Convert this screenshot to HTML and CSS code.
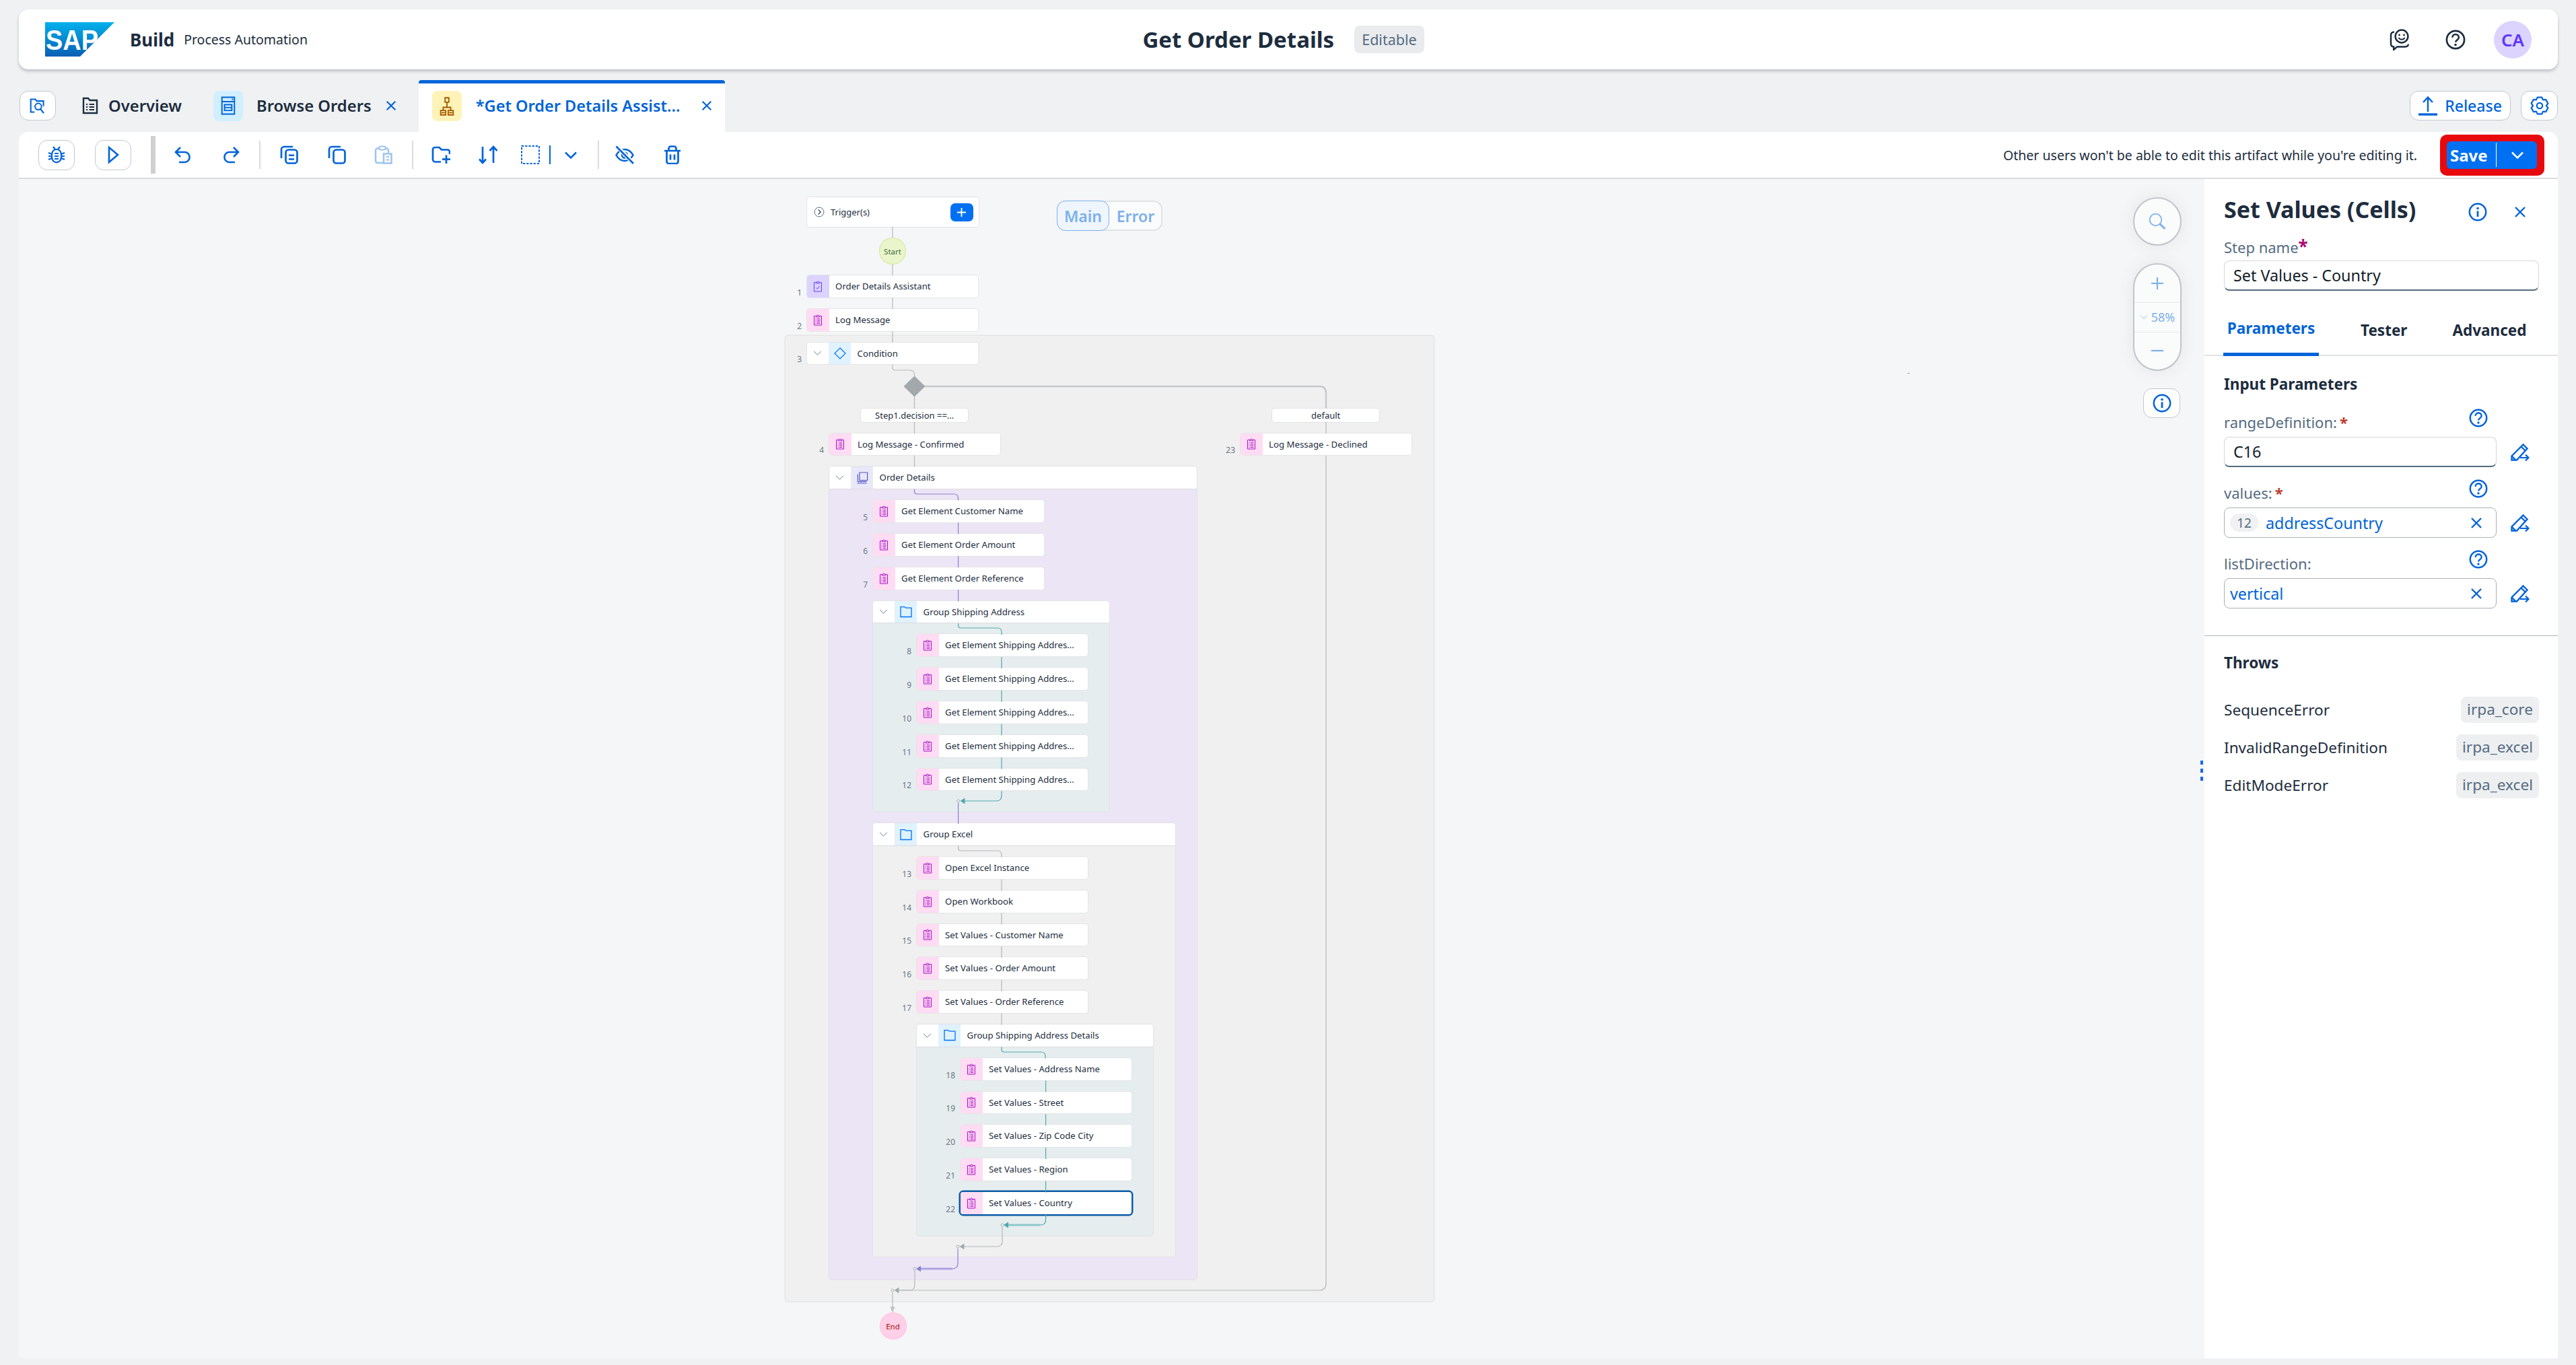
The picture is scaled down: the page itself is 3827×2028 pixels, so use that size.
FILE: index.html
```html
<!DOCTYPE html>
<html lang="en">
<head>
<meta charset="utf-8">
<title>Get Order Details</title>
<link rel="stylesheet" href="styles.css">
</head>
<body>
<svg class="defs" width="0" height="0" aria-hidden="true">
  <defs>
    <symbol id="clip" viewBox="0 0 14 18"><path d="M4.5 2.8H1.2V17h11.6V2.8H9.5M4.5 4.2h5V2.4H8.2C8.2 .6 5.8 .6 5.8 2.4H4.5z" fill="none" stroke="currentColor" stroke-width="1"/><path d="M3.2 7.2h1.2M5.6 7.2h5M3.2 9.6h1.2M5.6 9.6h5M3.2 12h1.2M5.6 12h5M3.2 14.4h1.2M5.6 14.4h5" stroke="currentColor" stroke-width="1"/></symbol>
    <symbol id="clipcheck" viewBox="0 0 14 18"><path d="M4.5 2.8H1.2V17h11.6V2.8H9.5M4.5 4.2h5V2.4H8.2C8.2 .6 5.8 .6 5.8 2.4H4.5z" fill="none" stroke="currentColor" stroke-width="1"/><path d="M4.4 11l2 2 3.4-4.4" fill="none" stroke="currentColor" stroke-width="1"/></symbol>
    <symbol id="folder" viewBox="0 0 18 18"><path d="M1 16.5V1.6h6l1.6 1.600h8.400v13.300z" fill="none" stroke="currentColor" stroke-width="1.3"/></symbol>
    <symbol id="stack" viewBox="0 0 18 18"><path d="M5 1h11.600v11.600H5zM2.400 3.400v11.200h13M1.600 17h14" fill="none" stroke="currentColor" stroke-width="1.2"/></symbol>
    <symbol id="chev" viewBox="0 0 14 10"><path d="M1 2l6 6 6-6" fill="none" stroke="currentColor" stroke-width="1"/></symbol>
    <symbol id="chevb" viewBox="0 0 18 11"><path d="M1 1.500l8 8 8-8" fill="none" stroke="currentColor" stroke-width="2.500"/></symbol>
    <symbol id="x" viewBox="0 0 20 20"><path d="M3 3l14 14M17 3L3 17" fill="none" stroke="currentColor" stroke-width="2.4"/></symbol>
    <symbol id="info" viewBox="0 0 28 28"><circle cx="14" cy="14" r="12.2" fill="none" stroke="currentColor" stroke-width="2.5"/><circle cx="14" cy="8.6" r="1.8" fill="currentColor"/><path d="M14 12.4V21" stroke="currentColor" stroke-width="2.8"/></symbol>
    <symbol id="help" viewBox="0 0 28 28"><circle cx="14" cy="14" r="12.2" fill="none" stroke="currentColor" stroke-width="2.5"/><path d="M9.6 11c0-6 9-6 9 0 0 3.4-4.500 3.200-4.500 6.400" fill="none" stroke="currentColor" stroke-width="2.4"/><circle cx="14" cy="21" r="1.700" fill="currentColor"/></symbol>
    <symbol id="edit" viewBox="0 0 28 28"><path d="M1.500 25.500v-6L18.500 2.500l6 6-15.500 17zM15.500 5.500l6 6M1.500 19.500l6 6" fill="none" stroke="currentColor" stroke-width="2.4"/><path d="M14 22h12.500M22 17.600l4.500 4.400-4.500 4.400" fill="none" stroke="currentColor" stroke-width="2.2"/></symbol>
  </defs>
</svg>
<div class="app">
  <header class="shell">
    <div class="brand">
      <svg class="sap-logo" viewBox="0 0 103 51" aria-label="SAP">
        <defs><linearGradient id="sapg" x1="0" y1="0" x2="0" y2="1"><stop offset="0" stop-color="#00b1eb"/><stop offset="1" stop-color="#0a5fb4"/></linearGradient></defs>
        <path d="M0 0H103L52 51H0z" fill="url(#sapg)"/>
        <text class="sap-letters" x="1" y="41" textLength="78" lengthAdjust="spacingAndGlyphs">SAP</text>
      </svg>
      <span class="brand-build">Build</span>
      <span class="brand-sub">Process Automation</span>
    </div>
    <div class="shell-center">
      <h1 class="doc-title">Get Order Details</h1>
      <span class="doc-state">Editable</span>
    </div>
    <div class="shell-right">
      <svg class="shell-ic fb" viewBox="0 0 30 32"><path d="M7 4.400C3.400 4.600 2 6.400 2 9v13c0 2.600 1.600 4.400 4.200 4.400V31l5-4.600h12c2.600 0 4.400-1.400 4.800-3.800" fill="none" stroke="#1d2d3e" stroke-width="2.5"/><circle cx="18" cy="11" r="9.400" fill="none" stroke="#1d2d3e" stroke-width="2.5"/><circle cx="14.500" cy="9" r="1.400" fill="#1d2d3e"/><circle cx="21.500" cy="9" r="1.400" fill="#1d2d3e"/><path d="M13.400 13c2.400 3.600 7 3.600 9.200 0" fill="none" stroke="#1d2d3e" stroke-width="2"/></svg>
      <svg class="shell-ic help-dark"><use href="#help"/></svg>
      <span class="avatar">CA</span>
    </div>
  </header>

  <nav class="tabs">
    <button class="icon-btn search-tab" type="button">
      <svg class="ic24" viewBox="0 0 28 28"><path d="M8.500 25H2V3h8l2.400 3H24v9" fill="none" stroke="#0064d9" stroke-width="2.4"/><circle cx="15" cy="15.500" r="5.600" fill="none" stroke="#0064d9" stroke-width="2.4"/><path d="M19 20l5.500 7" stroke="#0064d9" stroke-width="2.6"/></svg>
    </button>
    <div class="tab tab-overview">
      <svg class="ic24" viewBox="0 0 24 26"><path d="M2 24V2h7l2.400 3H22v19z" fill="none" stroke="#1d2d3e" stroke-width="2.4"/><path d="M6 11h2.200M10.600 11H18M6 15h2.200M10.600 15H18M6 19h2.200M10.600 19H18" stroke="#1d2d3e" stroke-width="2.2"/></svg>
      <span>Overview</span>
    </div>
    <div class="tab tab-browse">
      <span class="tab-tile tile-browse"><svg class="ic24" viewBox="0 0 20 26"><path d="M1.400 1.400h17.200v23.200H1.400zM1.400 7.400h17.200" fill="none" stroke="#0064d9" stroke-width="1.8"/><path d="M15 4.200h1.800" stroke="#0064d9" stroke-width="2"/><path d="M5 11.600h10v8H5z" fill="none" stroke="#0064d9" stroke-width="1.8"/><path d="M5 15.600h10" stroke="#0064d9" stroke-width="1.6"/></svg></span>
      <span>Browse Orders</span>
      <svg class="tab-x"><use href="#x"/></svg>
    </div>
    <div class="tab tab-active">
      <span class="tab-tile tile-flow"><svg class="ic24" viewBox="0 0 24 30"><path d="M9 1.400h6v7H9zM2 21.600h8v7H2zM14 21.600h8v7h-8zM12 8.400v8M6 21.600v-5h12v5M3.400 25h5.200M15.400 25h5.200" fill="none" stroke="#a45d00" stroke-width="2"/></svg></span>
      <span class="tab-name">*Get Order Details Assist...</span>
      <svg class="tab-x"><use href="#x"/></svg>
    </div>
    <div class="tabs-end">
      <button class="icon-btn release" type="button">
        <svg class="ic-release" viewBox="0 0 28 30"><path d="M14 24V3M7 10l7-7.400L21 10" fill="none" stroke="#0064d9" stroke-width="2.4"/><path d="M0 28h28" stroke="#0064d9" stroke-width="3.400"/></svg>
        <span>Release</span>
      </button>
      <button class="icon-btn gear" type="button">
        <svg class="ic-gear" viewBox="0 0 24 24"><path d="M9.150 1.370H14.850L16.250 4.640 19.780 4.220 22.630 9.150 20.500 12 22.630 14.850 19.780 19.780 16.250 19.360 14.850 22.630H9.150L7.750 19.360 4.220 19.780 1.370 14.850 3.500 12 1.370 9.150 4.220 4.220 7.750 4.640z" fill="none" stroke="#0064d9" stroke-width="1.900" stroke-linejoin="round"/><circle cx="12" cy="12" r="3.600" fill="none" stroke="#0064d9" stroke-width="1.900"/></svg>
      </button>
    </div>
  </nav>

  <section class="toolbar">
    <button class="icon-btn tool-round" type="button">
      <svg class="tool-ic" viewBox="0 0 28 28"><path d="M9 2l3 4M19 2l-3 4M9.500 7.500c2.500-2 6.500-2 9 0 2 2 2.600 5 2.600 8s-.6 6-2.600 8c-2.500 2.400-6.500 2.400-9 0-2-2-2.600-5-2.600-8s.6-6 2.600-8zM2 11l5 2M26 11l-5 2M2 16h5M26 16h-5M2 21l5-2M26 21l-5-2" fill="none" stroke="#0064d9" stroke-width="2.2"/><path d="M11 12h6M11 16h6M11 20h6" stroke="#0064d9" stroke-width="2"/></svg>
    </button>
    <button class="icon-btn tool-round" type="button">
      <svg class="tool-ic" viewBox="0 0 28 28"><path d="M8 3v22l13-11z" fill="none" stroke="#0064d9" stroke-width="2.6"/></svg>
    </button>
    <span class="tsep tsep-thick"></span>
    <svg class="tool-ic t-undo" viewBox="0 0 28 28"><path d="M10 3L3 10l7 7M3 10h13.500a7 7 0 0 1 7 7v1a7 7 0 0 1-7 7H8" fill="none" stroke="#0064d9" stroke-width="2.600"/></svg>
    <svg class="tool-ic t-redo" viewBox="0 0 28 28"><path d="M18 3l7 7-7 7M25 10H11.500a7 7 0 0 0-7 7v1a7 7 0 0 0 7 7H20" fill="none" stroke="#0064d9" stroke-width="2.600"/></svg>
    <span class="tsep tsep-1"></span>
    <svg class="tool-ic t-copy" viewBox="0 0 28 28"><path d="M20 2H7a4 4 0 0 0-4 4v13" fill="none" stroke="#0064d9" stroke-width="2.700"/><rect x="9.500" y="6.500" width="17" height="20" rx="4" fill="none" stroke="#0064d9" stroke-width="2.700"/><path d="M14 14.800h8M14 20.500h8" stroke="#0064d9" stroke-width="2.400"/></svg>
    <svg class="tool-ic t-dup" viewBox="0 0 28 28"><path d="M20 2H7a4 4 0 0 0-4 4v13" fill="none" stroke="#0064d9" stroke-width="2.700"/><rect x="9.500" y="6.500" width="17" height="20" rx="4" fill="none" stroke="#0064d9" stroke-width="2.700"/></svg>
    <svg class="tool-ic t-paste" viewBox="0 0 28 28"><path d="M8 4.500H6a3 3 0 0 0-3 3V23a3 3 0 0 0 3 3h8M18 4.500h1a3 3 0 0 1 3 3V11" fill="none" stroke="#9cc3f0" stroke-width="2.500"/><rect x="8" y="1.500" width="10" height="5" rx="2.500" fill="none" stroke="#9cc3f0" stroke-width="2.200"/><rect x="15" y="12.500" width="11.500" height="14" fill="none" stroke="#9cc3f0" stroke-width="2.500"/><path d="M18.500 17h4.500M18.500 21.500h4.500" stroke="#9cc3f0" stroke-width="2.200"/></svg>
    <span class="tsep tsep-2"></span>
    <svg class="tool-ic t-addgroup" viewBox="0 0 28 28"><path d="M14 24.500H6a4 4 0 0 1-4-4V6a3 3 0 0 1 3-3h6.500L15 6.500h9a3 3 0 0 1 3 3V13" fill="none" stroke="#0064d9" stroke-width="2.700"/><path d="M22 14.500V27M16 20.700h12" stroke="#0064d9" stroke-width="2.700"/></svg>
    <svg class="tool-ic t-sort" viewBox="0 0 28 28"><path d="M6 2V26M1 20.500L6 26l5-5.500M22 26V2M16.500 8L22 2l5.500 6" fill="none" stroke="#0064d9" stroke-width="2.700"/></svg>
    <svg class="tool-ic t-select" viewBox="0 0 28 28"><rect x="1" y="1" width="26" height="26" fill="none" stroke="#0064d9" stroke-width="2" stroke-dasharray="3.200 2"/></svg>
    <span class="tsep tsep-3"></span>
    <svg class="t-chev"><use href="#chevb"/></svg>
    <span class="tsep tsep-4"></span>
    <svg class="tool-ic t-hide" viewBox="0 0 28 28"><path d="M1.500 14.500C4.500 9 9 6 14 6s9.500 3 12.500 8.500C23.500 20 19 23 14 23S4.500 20 1.500 14.500z" fill="none" stroke="#0064d9" stroke-width="2.600"/><circle cx="14" cy="14.500" r="4" fill="none" stroke="#0064d9" stroke-width="2.400"/><path d="M2.500 1.500L27 26.500" stroke="#fff" stroke-width="6"/><path d="M1.500 1.500L27 27" stroke="#0064d9" stroke-width="2.700"/></svg>
    <svg class="tool-ic t-trash" viewBox="0 0 28 28"><path d="M2 8H26M5.500 8V24a3 3 0 0 0 3 3H19.500a3 3 0 0 0 3-3V8M8.500 8V4.500a3 3 0 0 1 3-3h5a3 3 0 0 1 3 3V8M11 13.500v8M17 13.500v8" fill="none" stroke="#0064d9" stroke-width="2.700"/></svg>
    <span class="lock-note">Other users won't be able to edit this artifact while you're editing it.</span>
    <div class="save-mark">
      <div class="save-btn"><span class="save-label">Save</span><span class="save-sep"></span><svg class="save-chev"><use href="#chevb"/></svg></div>
    </div>
  </section>

  <main class="work">
    <section class="canvas">
      <div class="flow">
        <div class="trigger">
          <svg class="trig-ic" viewBox="0 0 18 18"><circle cx="9" cy="9" r="7.800" fill="none" stroke="#556b82" stroke-width="1.100"/><path d="M7.400 5l4 4-4 4" fill="none" stroke="#1d2d3e" stroke-width="1.300"/></svg>
          <span class="trig-name">Trigger(s)</span>
          <span class="trig-add"><svg class="trig-plus" viewBox="0 0 16 16"><path d="M8 1v14M1 8h14" stroke="#fff" stroke-width="2"/></svg></span>
        </div>
        <div class="terminal start">Start</div>
        <div class="stack stack-top">
          <div class="step"><span class="num">1</span><span class="tile tile-task"><svg class="ic-step"><use href="#clipcheck"/></svg></span><span class="name">Order Details Assistant</span></div>
          <div class="step"><span class="num">2</span><span class="tile tile-act"><svg class="ic-step"><use href="#clip"/></svg></span><span class="name">Log Message</span></div>
        </div>
        <div class="cond">
          <div class="step step-cond"><span class="num">3</span><span class="toggle"><svg class="ic-chev"><use href="#chev"/></svg></span><span class="tile tile-blue"><svg class="ic-diamond" viewBox="0 0 18 18"><path d="M9 1l8 8-8 8-8-8z" fill="none" stroke="#0070f2" stroke-width="1.200"/></svg></span><span class="name">Condition</span></div>
          <div class="branches">
            <div class="branch branch-a">
              <div class="edge-label edge-a">Step1.decision ==...</div>
              <div class="stack">
                <div class="step"><span class="num">4</span><span class="tile tile-act"><svg class="ic-step"><use href="#clip"/></svg></span><span class="name">Log Message - Confirmed</span></div>
                <div class="group group-orders">
                  <div class="group-head"><span class="toggle"><svg class="ic-chev"><use href="#chev"/></svg></span><span class="tile tile-lav"><svg class="ic-folder"><use href="#stack"/></svg></span><span class="name">Order Details</span></div>
                  <div class="group-body stack">
                    <div class="step"><span class="num">5</span><span class="tile tile-act"><svg class="ic-step"><use href="#clip"/></svg></span><span class="name">Get Element Customer Name</span></div>
                    <div class="step"><span class="num">6</span><span class="tile tile-act"><svg class="ic-step"><use href="#clip"/></svg></span><span class="name">Get Element Order Amount</span></div>
                    <div class="step"><span class="num">7</span><span class="tile tile-act"><svg class="ic-step"><use href="#clip"/></svg></span><span class="name">Get Element Order Reference</span></div>
                    <div class="group group-shipping">
                      <div class="group-head"><span class="toggle"><svg class="ic-chev"><use href="#chev"/></svg></span><span class="tile tile-blue"><svg class="ic-folder"><use href="#folder"/></svg></span><span class="name">Group Shipping Address</span></div>
                      <div class="group-body stack">
                        <div class="step"><span class="num">8</span><span class="tile tile-act"><svg class="ic-step"><use href="#clip"/></svg></span><span class="name">Get Element Shipping Addres...</span></div>
                        <div class="step"><span class="num">9</span><span class="tile tile-act"><svg class="ic-step"><use href="#clip"/></svg></span><span class="name">Get Element Shipping Addres...</span></div>
                        <div class="step"><span class="num">10</span><span class="tile tile-act"><svg class="ic-step"><use href="#clip"/></svg></span><span class="name">Get Element Shipping Addres...</span></div>
                        <div class="step"><span class="num">11</span><span class="tile tile-act"><svg class="ic-step"><use href="#clip"/></svg></span><span class="name">Get Element Shipping Addres...</span></div>
                        <div class="step"><span class="num">12</span><span class="tile tile-act"><svg class="ic-step"><use href="#clip"/></svg></span><span class="name">Get Element Shipping Addres...</span></div>
                      </div>
                    </div>
                    <div class="group group-excel">
                      <div class="group-head"><span class="toggle"><svg class="ic-chev"><use href="#chev"/></svg></span><span class="tile tile-blue"><svg class="ic-folder"><use href="#folder"/></svg></span><span class="name">Group Excel</span></div>
                      <div class="group-body stack">
                        <div class="step"><span class="num">13</span><span class="tile tile-act"><svg class="ic-step"><use href="#clip"/></svg></span><span class="name">Open Excel Instance</span></div>
                        <div class="step"><span class="num">14</span><span class="tile tile-act"><svg class="ic-step"><use href="#clip"/></svg></span><span class="name">Open Workbook</span></div>
                        <div class="step"><span class="num">15</span><span class="tile tile-act"><svg class="ic-step"><use href="#clip"/></svg></span><span class="name">Set Values - Customer Name</span></div>
                        <div class="step"><span class="num">16</span><span class="tile tile-act"><svg class="ic-step"><use href="#clip"/></svg></span><span class="name">Set Values - Order Amount</span></div>
                        <div class="step"><span class="num">17</span><span class="tile tile-act"><svg class="ic-step"><use href="#clip"/></svg></span><span class="name">Set Values - Order Reference</span></div>
                        <div class="group group-details">
                          <div class="group-head"><span class="toggle"><svg class="ic-chev"><use href="#chev"/></svg></span><span class="tile tile-blue"><svg class="ic-folder"><use href="#folder"/></svg></span><span class="name">Group Shipping Address Details</span></div>
                          <div class="group-body stack">
                            <div class="step"><span class="num">18</span><span class="tile tile-act"><svg class="ic-step"><use href="#clip"/></svg></span><span class="name">Set Values - Address Name</span></div>
                            <div class="step"><span class="num">19</span><span class="tile tile-act"><svg class="ic-step"><use href="#clip"/></svg></span><span class="name">Set Values - Street</span></div>
                            <div class="step"><span class="num">20</span><span class="tile tile-act"><svg class="ic-step"><use href="#clip"/></svg></span><span class="name">Set Values - Zip Code City</span></div>
                            <div class="step"><span class="num">21</span><span class="tile tile-act"><svg class="ic-step"><use href="#clip"/></svg></span><span class="name">Set Values - Region</span></div>
                            <div class="step step-selected"><span class="num">22</span><span class="tile tile-act"><svg class="ic-step"><use href="#clip"/></svg></span><span class="name">Set Values - Country</span></div>
                          </div>
                        </div>
                      </div>
                    </div>
                  </div>
                </div>
              </div>
            </div>
            <div class="branch branch-b">
              <div class="edge-label edge-b">default</div>
              <div class="step"><span class="num">23</span><span class="tile tile-act"><svg class="ic-step"><use href="#clip"/></svg></span><span class="name">Log Message - Declined</span></div>
            </div>
          </div>
        </div>
        <div class="terminal end">End</div>
      </div>

      <svg class="links" viewBox="28 266 3247 1752">
        <g class="ln ln-gray">
          <path d="M1326 337V353M1326 393V409.400M1326 442.200V459.200M1326 492V509"/>
          <path d="M1326 541.800V546q0 4 4 4H1352q6.500 0 6.500 7V560"/>
          <path d="M1358.500 589V607M1358.500 627V644M1358.500 676.800V693.800"/>
          <path class="ln-wide" d="M1372 574H1960q10 0 10 10V607"/>
          <path d="M1970 627V644M1970 676.800V1907q0 10-10 10H1336"/>
          <path d="M1423.600 1256.800V1260q0 4 4 4H1482q6 0 6 6V1273.800"/>
          <path d="M1488 1306.600V1323.600M1488 1356.400V1373.400M1488 1406.200V1423.200M1488 1456V1473M1488 1505.800V1522.800"/>
          <path d="M1489 1823V1844q0 8-8 8H1430"/>
          <path d="M1359 1888V1909q0 8-8 8H1334"/>
          <path d="M1326 1920V1942"/>
        </g>
        <g class="ln ln-purple">
          <path d="M1358.500 726.600V730q0 4 4 4H1417q6.500 0 6.500 6V743.600"/>
          <path d="M1423.600 776.400V793.400M1423.600 826.200V843.200M1423.600 876V893.400M1423.600 1193V1224"/>
          <path d="M1423 1855V1877q0 8-8 8H1366"/>
        </g>
        <g class="ln ln-teal">
          <path d="M1423.600 926.200V929q0 4 4 4H1482q6 0 6 6V943.200"/>
          <path d="M1488 976V993M1488 1025.800V1042.800M1488 1075.600V1092.600M1488 1125.400V1142.400M1488 1175.200V1182q0 8-8 8H1430"/>
          <path d="M1488 1555.600V1559q0 4 4 4H1547q6 0 6 6V1572.600"/>
          <path d="M1553.600 1605.400V1622.400M1553.600 1655.200V1672.200M1553.600 1705V1722M1553.600 1754.800V1771.800M1553.600 1804.600V1812q0 8-8 8H1496"/>
        </g>
        <path class="ln-thick-teal" d="M1545 1820H1496"/>
        <path class="ln-thick-purple" d="M1415 1885H1366"/>
        <path class="decision" d="M1358.500 558.500L1374.500 574 1358.500 589.500 1342.500 574z"/>
        <path class="ah-teal" d="M1426.500 1190l7-4.500v9zM1491 1820l7-4.500v9z"/>
        <path class="ah-gray" d="M1425.500 1852l7-4.500v9zM1328.500 1917l7-4.500v9z"/>
        <path class="ah-purple" d="M1361 1885l7-4.500v9z"/>
        <path class="ah-end" d="M1326 1950.500l-3.500-9h7z"/>
        <g class="join">
          <circle cx="1423.600" cy="1190" r="2"/><circle cx="1489" cy="1820" r="2"/><circle cx="1423" cy="1852" r="2"/><circle cx="1359" cy="1885" r="2"/><circle cx="1326" cy="1917" r="2"/>
        </g>
      </svg>

      <div class="mode-switch"><span class="mode mode-on">Main</span><span class="mode">Error</span></div>

      <div class="zoom-tools">
        <button class="zoom-search" type="button"><svg class="ic24" viewBox="0 0 26 26"><circle cx="10.500" cy="10.500" r="8.800" fill="none" stroke="#7db0ec" stroke-width="1.800"/><path d="M16.500 16.500l8 7.500" stroke="#7db0ec" stroke-width="3"/></svg></button>
        <div class="zoom-pill">
          <span class="zoom-cell"><svg class="zoom-sign" viewBox="0 0 20 20"><path d="M10 1v18M1 10h18" stroke="#7db0ec" stroke-width="2.200"/></svg></span>
          <span class="zoom-cell zoom-val"><svg class="zoom-chev"><use href="#chev"/></svg>58%</span>
          <span class="zoom-cell"><svg class="zoom-sign" viewBox="0 0 20 20"><path d="M1 10h18" stroke="#7db0ec" stroke-width="2.200"/></svg></span>
        </div>
        <button class="icon-btn zoom-info" type="button"><svg class="ic28 blue"><use href="#info"/></svg></button>
      </div>
      <span class="stray"></span>
    </section>

    <aside class="panel">
      <span class="grip"><i></i><i></i><i></i></span>
      <div class="panel-head">
        <h2 class="panel-title">Set Values (Cells)</h2>
        <svg class="ic28 blue"><use href="#info"/></svg>
        <svg class="ic-close blue"><use href="#x"/></svg>
      </div>
      <div class="stepname">
        <label class="step-label">Step name<b class="req-pink">*</b></label>
        <div class="input input-value">Set Values - Country</div>
      </div>
      <div class="panel-tabs">
        <span class="ptab ptab-on">Parameters</span>
        <span class="ptab ptab-tester">Tester</span>
        <span class="ptab ptab-adv">Advanced</span>
      </div>
      <div class="params">
        <h3 class="sec-title">Input Parameters</h3>
        <div class="fields">
          <div class="field">
            <div class="field-top"><label class="field-label">rangeDefinition:<b class="req">*</b></label><svg class="ic28 blue"><use href="#help"/></svg></div>
            <div class="field-row"><div class="input input-value">C16</div><svg class="ic-edit blue"><use href="#edit"/></svg></div>
          </div>
          <div class="field">
            <div class="field-top"><label class="field-label">values:<b class="req">*</b></label><svg class="ic28 blue"><use href="#help"/></svg></div>
            <div class="field-row"><div class="input input-token"><span class="type-badge">12</span><span class="token">addressCountry</span><svg class="ic-clear blue"><use href="#x"/></svg></div><svg class="ic-edit blue"><use href="#edit"/></svg></div>
          </div>
          <div class="field">
            <div class="field-top"><label class="field-label">listDirection:</label><svg class="ic28 blue"><use href="#help"/></svg></div>
            <div class="field-row"><div class="input input-token"><span class="token">vertical</span><svg class="ic-clear blue"><use href="#x"/></svg></div><svg class="ic-edit blue"><use href="#edit"/></svg></div>
          </div>
        </div>
      </div>
      <div class="throws">
        <h3 class="sec-title">Throws</h3>
        <ul class="throw-list">
          <li class="throw"><span>SequenceError</span><span class="pkg">irpa_core</span></li>
          <li class="throw"><span>InvalidRangeDefinition</span><span class="pkg">irpa_excel</span></li>
          <li class="throw"><span>EditModeError</span><span class="pkg">irpa_excel</span></li>
        </ul>
      </div>
    </aside>
  </main>
</div>
</body>
</html>
```

FILE: styles.css
```css
* { box-sizing: border-box; }
html, body { margin: 0; padding: 0; }
body {
  width: 3827px; height: 2028px; overflow: hidden;
  background: #eff1f3; color: #1d2d3e;
  font-family: "Noto Sans", "Open Sans", sans-serif; font-size: 22px;
}
.defs { position: absolute; }
h1, h2, h3, ul { margin: 0; padding: 0; }
button { font: inherit; color: inherit; padding: 0; cursor: pointer; }
.blue { color: #0064d9; }

.app { height: 2028px; padding: 14px 27px 10px 28px; display: flex; flex-direction: column; }

/* shell */
.shell {
  height: 89px; flex: none; background: #fff; border-radius: 14px;
  box-shadow: 0 3px 4px rgba(60, 70, 80, .28);
  display: grid; grid-template-columns: 1fr auto 1fr; align-items: center;
  padding: 0 39px 0 39px;
}
.brand { display: flex; align-items: center; }
.sap-logo { width: 103px; height: 51px; flex: none; }
.sap-letters { font-family: "Liberation Sans", sans-serif; font-weight: 700; font-size: 43px; fill: #fff; }
.brand-build { margin-left: 23px; font-size: 26px; font-weight: 700; }
.brand-sub { margin-left: 14px; font-size: 19.500px; }
.shell-center { display: flex; align-items: center; gap: 30px; margin-right: 15px; }
.doc-title { font-size: 33px; font-weight: 700; }
.doc-state {
  height: 41px; padding: 0 11px; display: flex; align-items: center;
  background: #e9ebed; color: #556b82; border-radius: 8px; font-size: 21.500px;
}
.shell-right { display: flex; align-items: center; justify-content: flex-end; }
.shell-ic { width: 30px; height: 30px; }
.fb { height: 32px; }
.help-dark { margin-left: 53px; color: #1d2d3e; }
.avatar {
  margin-left: 42px; width: 56px; height: 56px; border-radius: 50%;
  background: #dcd3ff; color: #5d36ff; font-size: 26px; font-weight: 600;
  display: flex; align-items: center; justify-content: center;
}

/* tabs */
.tabs { height: 93px; flex: none; padding-top: 32px; display: flex; align-items: flex-start; }
.icon-btn {
  background: #fff; border: 1.500px solid #c3c9cf; border-radius: 13px;
  display: flex; align-items: center; justify-content: center;
}
.search-tab { width: 54px; height: 44px; margin-left: 1px; }
.ic24 { width: 24px; height: 28px; flex: none; }
.tab { display: flex; align-items: center; font-size: 23.800px; font-weight: 600; height: 44px; }
.tab-overview { margin-left: 39px; gap: 15px; }
.tab-browse { margin-left: 47px; }
.tab-tile { width: 44px; height: 45px; border-radius: 8px; display: flex; align-items: center; justify-content: center; margin-right: 20px; flex: none; }
.tile-browse { background: #d1efff; }
.tile-flow { background: #fff3b8; }
.tab-x { width: 18px; height: 18px; margin-left: 20px; color: #0064d9; flex: none; }
.tab-active {
  margin: -16px 0 0 32px; width: 455px; height: 77px; padding: 11px 18px 0 20px;
  background: #fff; border-top: 5px solid #0064d9; border-radius: 4px 4px 0 0;
  align-items: flex-start;
}
.tab-active .tab-x { margin-top: 13px; margin-left: auto; }
.tab-name { color: #0064d9; margin-left: 1px; line-height: 44px; height: 44px; white-space: nowrap; font-size: 23.500px; }
.tabs-end { margin-left: auto; display: flex; gap: 15px; }
.release { width: 150px; height: 44px; gap: 11px; color: #0064d9; font-size: 23px; font-weight: 500; }
.ic-release { width: 28px; height: 30px; }
.gear { width: 55px; height: 44px; }
.ic-gear { width: 28px; height: 28px; }

/* toolbar */
.toolbar {
  height: 70px; flex: none; background: #fff; border-bottom: 2px solid #dcdcdc;
  border-radius: 14px 14px 0 0; display: flex; align-items: center;
  padding-left: 29px;
}
.tool-round { width: 54px; height: 45px; margin-right: 30px; flex: none; }
.tool-round + .tool-round + .tsep { margin-left: -1px; }
.tool-ic { width: 28px; height: 28px; flex: none; }
.tsep { width: 2px; height: 42px; background: #d9dbdd; flex: none; }
.tsep-thick { width: 7px; height: 56px; background: #d0d0d0; margin-right: 27px; }
.t-redo { margin-left: 43px; }
.tsep-1 { margin-left: 28px; margin-right: 28px; }
.t-dup { margin-left: 43px; }
.t-paste { margin-left: 41px; }
.tsep-2 { margin-left: 29px; margin-right: 27px; }
.t-sort { margin-left: 42px; }
.t-select { margin-left: 35px; }
.tsep-3 { margin-left: 14px; height: 28px; width: 2px; background: #0064d9; }
.t-chev { width: 18px; height: 11px; margin-left: 21px; color: #0064d9; flex: none; }
.tsep-4 { margin-left: 31px; margin-right: 24px; }
.t-trash { margin-left: 43px; }
.lock-note { margin-left: auto; font-size: 19.500px; white-space: nowrap; }
.save-mark {
  margin: 0 20px 0 34px; width: 155px; height: 61px; padding: 10px 11px 10px 10px;
  background: #e8090d; border-radius: 10px; flex: none;
}
.save-btn { height: 41px; background: #0070f2; border-radius: 6px; display: flex; align-items: center; color: #fff; font-size: 24px; font-weight: 700; padding-left: 5px; }
.save-sep { width: 1.500px; height: 36px; background: #fff; margin-left: 12px; }
.save-chev { width: 18px; height: 11px; margin-left: 22px; color: #fff; }

/* work */
.work { flex: 1; min-height: 0; display: flex; }
.canvas { flex: 1; min-width: 0; background: #f5f6f7; position: relative; overflow: hidden; }
.links { position: absolute; left: 0; top: 0; width: 3247px; height: 1752px; pointer-events: none; }
.ln path { fill: none; stroke-width: 1.200; }
.ln-gray { stroke: #b4b7ba; }
.ln-purple { stroke: #8b80d0; }
.ln-teal { stroke: #4fa9ad; }
.ln .ln-wide { stroke: #c6c9cc; stroke-width: 2.400; }
.ln-thick-teal { stroke: #8ec9cc; stroke-width: 3; fill: none; }
.ln-thick-purple { stroke: #aaa3e0; stroke-width: 3; fill: none; }
.decision { fill: #a3a8ad; }
.ah-teal { fill: #4fa9ad; }
.ah-gray { fill: #a3a8ad; }
.ah-purple { fill: #8b80d0; }
.ah-end { fill: #c0c3c6; }
.join circle { fill: #f5f6f7; stroke: #a9adb1; stroke-width: 1; }

.flow { position: absolute; left: 1171px; top: 27px; display: flex; flex-direction: column; align-items: flex-start; width: 254px; }
.trigger {
  width: 254.500px; height: 44px; flex: none; background: #fff; border-radius: 4px;
  box-shadow: 0 0 0 1px #e2e3e4; display: flex; align-items: center; padding: 0 8px 0 10px;
  font-size: 13px; color: #1d2d3e;
}
.trig-ic { width: 16px; height: 16px; }
.trig-name { margin-left: 9px; }
.trig-add { margin-left: auto; width: 33.500px; height: 27px; border-radius: 7px; background: #0070f2; display: flex; align-items: center; justify-content: center; }
.trig-plus { width: 15px; height: 15px; }
.terminal {
  width: 40px; height: 40px; border-radius: 50%; flex: none;
  display: flex; align-items: center; justify-content: center; font-size: 11.500px;
}
.start { margin: 16px 0 16px 107px; background: #ebf5cb; box-shadow: inset 0 0 0 1px #d6e6a4; color: #3a6b3e; }
.end { margin: 17.700px 0 0 107.500px; background: #ffd0e7; box-shadow: inset 0 0 0 1px #ffc2df; color: #aa0808; }

.stack { display: flex; flex-direction: column; gap: 17px; align-items: flex-start; }
.step {
  width: 254px; height: 32.800px; flex: none; position: relative; background: #fff; border-radius: 4px;
  box-shadow: 0 0 0 1px #e4e5e6; display: flex; align-items: stretch; font-size: 13.200px;
}
.num { position: absolute; right: calc(100% + 8px); bottom: -1px; font-size: 12px; line-height: 16px; color: #6a7785; }
.tile { width: 32.600px; flex: none; display: flex; align-items: center; justify-content: center; }
.tile-act { background: #ffdcf3; color: #a100c2; border-radius: 4px 0 0 4px; }
.tile-task { background: #dcd3ff; color: #5d36ff; border-radius: 4px 0 0 4px; }
.tile-blue { background: #dff2ff; color: #0070f2; }
.tile-lav { background: #e9e8f8; color: #5b54c9; }
.ic-step { width: 14px; height: 17px; }
.ic-folder { width: 18px; height: 18px; }
.ic-diamond { width: 18px; height: 18px; }
.name { padding-left: 9.500px; line-height: 32.800px; white-space: nowrap; color: #1d2d3e; }
.toggle { width: 32.500px; flex: none; display: flex; align-items: center; justify-content: center; color: #556b82; border-right: 1px solid #eceeef; }
.ic-chev { width: 13px; height: 9px; }

.cond {
  margin: 7px 0 0 -32.500px; width: 963px; height: 1434px; flex: none; background: #f0f0f0; border-radius: 4px;
  box-shadow: 0 0 0 1.500px #e5e5e5; padding-top: 10px;
}
.step-cond { margin-left: 32.500px; }
.branches { display: flex; margin-top: 65.200px; padding-left: 65.500px; gap: 65px; align-items: flex-start; }
.branch { display: flex; flex-direction: column; align-items: flex-start; flex: none; }
.edge-label {
  height: 20px; width: 159.400px; margin: 0 0 17px 47px; background: #fff; border-radius: 4px;
  box-shadow: 0 0 0 1px #e2e3e4; font-size: 13px; line-height: 20px; text-align: center; flex: none;
}
.group { flex: none; border-radius: 4px; box-shadow: 0 0 0 1px #e2e2e6; }
.group-head {
  height: 32.800px; background: #fff; display: flex; align-items: stretch; font-size: 13.200px;
  border-radius: 4px 4px 0 0; box-shadow: 0 1px 0 #dcdcdf;
}
.group-body { padding: 17px 0 0 65px; }
.group-orders { width: 546px; background: #ece5f6; }
.group-orders > .group-body { padding-bottom: 33.600px; }
.group-shipping { width: 351px; background: #e6edef; margin-bottom: .600px; }
.group-shipping > .group-body { padding-bottom: 31.200px; }
.group-excel { width: 448.500px; background: #f0f0f0; }
.group-excel > .group-body { padding-bottom: 31.400px; }
.group-details { width: 351px; background: #e6edef; }
.group-details > .group-body { padding-bottom: 32.100px; }
.step-selected { box-shadow: 0 0 0 2.500px #0b5ca6; }

.mode-switch {
  position: absolute; left: 1542px; top: 32px; width: 156.500px; height: 45px; border-radius: 13px;
  background: #fafbfb; box-shadow: inset 0 0 0 2px #e0e2e4; display: flex; align-items: stretch;
  color: #7db0ec; font-size: 23px; font-weight: 600;
}
.mode { display: flex; align-items: center; justify-content: center; width: 78px; }
.mode-on { background: #eef5fc; border: 1.500px solid #7db0ec; border-radius: 13px; }
.zoom-tools {
  position: absolute; right: 34px; top: 27px; width: 72px;
  display: flex; flex-direction: column; align-items: flex-end; gap: 26px;
}
.zoom-search, .zoom-pill {
  width: 72px; background: #fafbfb; border: 2px solid #c0c5ca;
  box-shadow: 0 0 24px rgba(80, 90, 100, .1);
}
.zoom-search { height: 72px; border-radius: 50%; display: flex; align-items: center; justify-content: center; }
.zoom-search .ic24 { width: 26px; height: 26px; }
.zoom-pill { height: 160px; border-radius: 36px; display: flex; flex-direction: column; }
.zoom-cell { flex: 1; display: flex; align-items: center; justify-content: center; color: #7db0ec; }
.zoom-val { flex: none; height: 45px; border-top: 1px solid #e6e8ea; border-bottom: 1px solid #e6e8ea; font-size: 18px; gap: 5px; }
.zoom-sign { width: 20px; height: 20px; }
.zoom-chev { width: 12px; height: 8px; color: #7db0ec; flex: none; }
.zoom-info { width: 55px; height: 44px; margin-right: 2px; }
.ic28 { width: 28px; height: 28px; flex: none; }
.stray { position: absolute; left: 2806px; top: 288px; width: 3px; height: 1px; background: #9aa0a6; }

/* panel */
.panel { width: 525px; flex: none; background: #fff; position: relative; padding-top: 29px; }
.grip { position: absolute; left: -6px; top: 864px; display: flex; flex-direction: column; gap: 6px; }
.grip i { display: block; width: 4px; height: 6px; background: #1b66f3; }
.panel-head { display: grid; grid-template-columns: 1fr 28px 28px; column-gap: 35px; align-items: center; padding: 0 42px 0 29px; height: 40px; }
.panel-title { font-size: 34px; font-weight: 700; white-space: nowrap; margin-top: -9px; }
.ic-close { width: 20px; height: 20px; margin: 0 4px; }
.stepname { padding: 17px 28px 0 29px; }
.step-label { display: block; height: 30px; line-height: 30px; font-size: 22px; color: #556b82; }
.req-pink { color: #aa0a72; font-size: 26px; font-weight: 700; line-height: 20px; }
.input {
  height: 45px; border-radius: 8px; display: flex; align-items: center; background: #fff; font-size: 23.300px; color: #131e29;
}
.stepname .input { margin-top: 5px; }
.input-value { border: 1.500px solid #d3d7da; border-bottom: 2px solid #556b82; padding-left: 13px; }
.input-token { border: 1.500px solid #a9b0b7; padding: 0 19px 0 8px; color: #0064d9; }
.panel-tabs {
  margin-top: 24px; height: 73px; display: flex; align-items: stretch; padding-left: 28px;
  border-bottom: 2px solid #e0e2e4; font-size: 22.500px; font-weight: 700;
}
.ptab { display: flex; align-items: center; height: 73px; padding-bottom: 5px; }
.ptab-on { width: 142px; justify-content: center; color: #0064d9; border-bottom: 5px solid #0064d9; padding-bottom: 5px; }
.ptab-tester { margin-left: 62px; }
.ptab-adv { margin-left: 67px; }
.params { padding: 27px 28px 40px 29px; border-bottom: 1.500px solid #a9b4be; }
.sec-title { font-size: 22.500px; font-weight: 700; line-height: 30px; }
.fields { margin-top: 19px; display: flex; flex-direction: column; gap: 16px; }
.field-top { height: 44px; display: grid; grid-template-columns: 1fr 28px; align-items: center; padding-right: 76px; }
.field-top .ic28 { margin-top: -12px; }
.field-label { color: #556b82; font-size: 22px; }
.req { color: #c0392b; margin-left: 4px; font-weight: 700; }
.field-row { display: grid; grid-template-columns: 405px 28px; column-gap: 21px; align-items: center; }
.ic-edit { width: 28px; height: 28px; }
.type-badge { width: 42px; height: 27px; border-radius: 14px; background: #eff1f2; color: #556b82; font-size: 19px; display: flex; align-items: center; justify-content: center; margin-right: 11px; }
.ic-clear { width: 20px; height: 20px; margin-left: auto; }
.throws { padding: 25px 28px 0 29px; }
.throw-list { list-style: none; margin-top: 35px; display: flex; flex-direction: column; gap: 17px; }
.throw { display: flex; justify-content: space-between; align-items: center; height: 39px; font-size: 22.600px; }
.pkg { height: 39px; padding: 0 9px; background: #edeff0; color: #556b82; border-radius: 8px; line-height: 38px; }
```
